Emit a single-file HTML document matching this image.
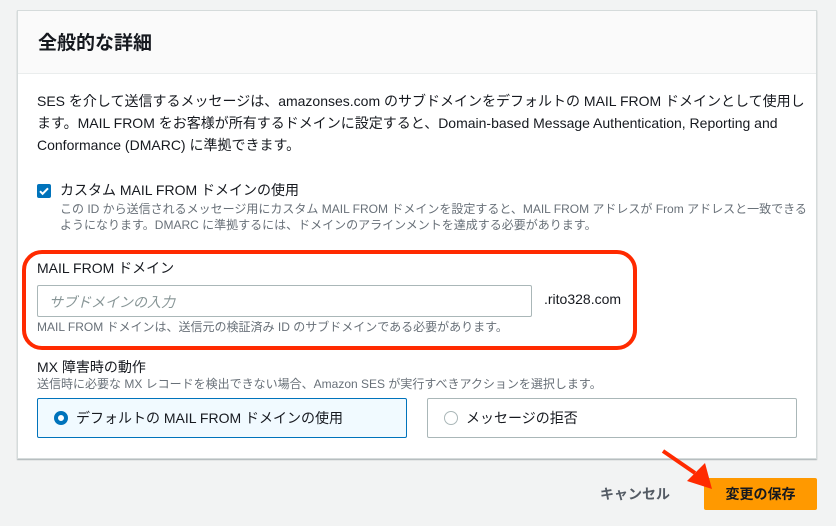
<!DOCTYPE html>
<html><head><meta charset="utf-8"><style>
*{box-sizing:border-box;margin:0;padding:0}
body{width:836px;height:526px;background:#f2f3f3;font-family:"Liberation Sans","Noto Sans CJK JP",sans-serif;color:#16191f;position:relative;overflow:hidden}
.card{position:absolute;left:17px;top:10px;width:800px;height:449px;background:#fff;border:1px solid #d5dbdb;box-shadow:0 1px 1px rgba(0,28,36,.3)}
.hdr{height:63px;background:#fafafa;border-bottom:1px solid #eaeded;padding:17px 20px 0}
.hdr h2{font-size:19px;font-weight:bold}
.abs{position:absolute;white-space:nowrap}
.p{font-size:14px;line-height:22px}
.s{font-size:12px;color:#687078;line-height:16px}
</style></head><body>
<div class="card"><div class="hdr"><h2>全般的な詳細</h2></div></div>
<div class="abs p" style="left:37px;top:90px">SES を介して送信するメッセージは、amazonses.com のサブドメインをデフォルトの MAIL FROM ドメインとして使用し<br>ます。MAIL FROM をお客様が所有するドメインに設定すると、Domain-based Message Authentication, Reporting and<br>Conformance (DMARC) に準拠できます。</div>
<div class="abs" style="left:37px;top:184px;width:14px;height:14px;background:#0073bb;border-radius:2px"><svg width="14" height="14"><path d="M3 7.2l2.6 2.6L11 4.3" stroke="#fff" stroke-width="2" fill="none"/></svg></div>
<div class="abs p" style="left:60px;top:179px">カスタム MAIL FROM ドメインの使用</div>
<div class="abs s" style="left:60px;top:201px">この ID から送信されるメッセージ用にカスタム MAIL FROM ドメインを設定すると、MAIL FROM アドレスが From アドレスと一致できる<br>ようになります。DMARC に準拠するには、ドメインのアラインメントを達成する必要があります。</div>
<div class="abs" style="left:22px;top:250px;width:615px;height:100px;border:4px solid #ff2a00;border-radius:20px"></div>
<div class="abs p" style="left:37px;top:257px">MAIL FROM ドメイン</div>
<div class="abs" style="left:37px;top:285px;width:495px;height:32px;border:1px solid #aab7b8;border-radius:2px;font-size:14px;color:#879596;font-style:italic;padding:6px 11px">サブドメインの入力</div>
<div class="abs p" style="left:544px;top:288px">.rito328.com</div>
<div class="abs s" style="left:37px;top:319px">MAIL FROM ドメインは、送信元の検証済み ID のサブドメインである必要があります。</div>
<div class="abs p" style="left:37px;top:356px">MX 障害時の動作</div>
<div class="abs s" style="left:37px;top:376px">送信時に必要な MX レコードを検出できない場合、Amazon SES が実行すべきアクションを選択します。</div>
<div class="abs" style="left:37px;top:398px;width:370px;height:40px;background:#f1faff;border:1px solid #0073bb;border-radius:2px"></div>
<div class="abs" style="left:54px;top:411px;width:14px;height:14px;border:4px solid #0073bb;border-radius:50%;background:#fff"></div>
<div class="abs p" style="left:76px;top:407px">デフォルトの MAIL FROM ドメインの使用</div>
<div class="abs" style="left:427px;top:398px;width:370px;height:40px;background:#fff;border:1px solid #aab7b8;border-radius:2px"></div>
<div class="abs" style="left:444px;top:411px;width:14px;height:14px;border:1px solid #aab7b8;border-radius:50%"></div>
<div class="abs p" style="left:466px;top:407px">メッセージの拒否</div>
<div class="abs" style="left:600px;top:484px;font-size:14px;font-weight:bold;color:#545b64">キャンセル</div>
<div class="abs" style="left:704px;top:478px;width:113px;height:32px;background:#ff9900;border-radius:2px;font-size:14px;font-weight:bold;text-align:center;line-height:32px">変更の保存</div>
<svg class="abs" style="left:655px;top:445px" width="70" height="55"><path d="M8 6L40 28" stroke="#ff2a00" stroke-width="4"/><path d="M32 36L57 44L50 18Z" fill="#ff2a00"/></svg>
</body></html>
